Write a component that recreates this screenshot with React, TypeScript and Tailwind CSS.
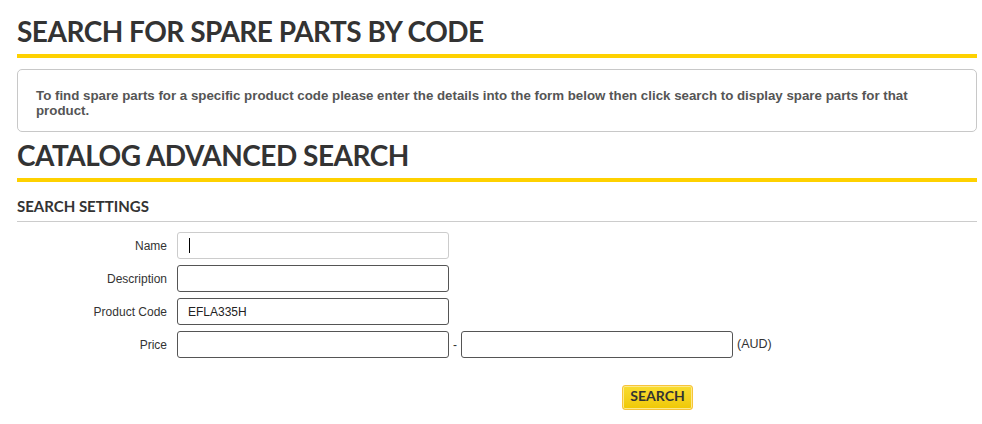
const heading = "font-['Lato',sans-serif] font-bold uppercase text-[#333333]";

function Field({ label, value, light, caret }: { label: string; value?: string; light?: boolean; caret?: boolean }) {
  return (
    <div className="flex items-center">
      <label className="w-[160px] pr-[10px] text-right text-[12px] text-[#333333]">{label}</label>
      <div className="relative">
        <input
          readOnly
          value={value ?? ""}
          className={`h-[27px] w-[272px] rounded-[3px] border bg-white px-[10px] text-[12px] text-[#222222] outline-none ${
            light ? "border-[#cccccc]" : "border-[#555555]"
          }`}
        />
        {caret && <div className="absolute left-[12px] top-[6px] h-[15px] w-px bg-black" />}
      </div>
    </div>
  );
}

export default function App() {
  return (
    <div className="w-[982px] bg-white font-['Liberation_Sans',Arial,sans-serif]">
      <div className="ml-[17px] w-[960px]">
        <h1 className={`${heading} mt-[17px] border-b-4 border-[#fed100] pb-[9px] text-[28px] leading-[28px] tracking-[-0.5px]`}>
          Search for spare parts by code
        </h1>

        <div className="mt-[11px] h-[63px] rounded-[5px] border border-[#c8c8c8] pl-[18px] pr-[40px] pt-[18px]">
          <p className="text-[13.3px] font-bold leading-[15px] text-[#555555]">
            To find spare parts for a specific product code please enter the details into the form below then click
            search to display spare parts for that product.
          </p>
        </div>

        <h2 className={`${heading} mt-[9px] border-b-4 border-[#fed100] pb-[9px] text-[28px] leading-[28px] tracking-[-0.5px]`}>
          Catalog advanced search
        </h2>

        <h3 className={`${heading} mt-[16px] border-b border-[#cccccc] pb-[7px] text-[15px] leading-[16px]`}>
          Search settings
        </h3>

        <div className="mt-[10px] flex flex-col gap-[6px]">
          <Field label="Name" light caret />
          <Field label="Description" />
          <Field label="Product Code" value="EFLA335H" />
          <div className="flex items-center">
            <label className="w-[160px] pr-[10px] text-right text-[12px] text-[#333333]">Price</label>
            <input
              readOnly
              className="h-[27px] w-[272px] rounded-[3px] border border-[#555555] bg-white outline-none"
            />
            <span className="w-[12px] text-center text-[12px] text-[#333333]">-</span>
            <input
              readOnly
              className="h-[27px] w-[272px] rounded-[3px] border border-[#555555] bg-white outline-none"
            />
            <span className="ml-[4px] text-[12.5px] text-[#333333]">(AUD)</span>
          </div>
        </div>

        <div className="mt-[26px] pl-[605px] pb-[15px]">
          <button
            className={`${heading} h-[25px] w-[71px] rounded-[3px] border border-[#f7c33c] bg-gradient-to-b from-[#f9dc2e] to-[#efc800] pb-[2px] text-[14px] leading-none text-[#2a2a2a] shadow-[inset_0_0_0_1px_#fde98a]`}
          >
            Search
          </button>
        </div>
      </div>
    </div>
  );
}
